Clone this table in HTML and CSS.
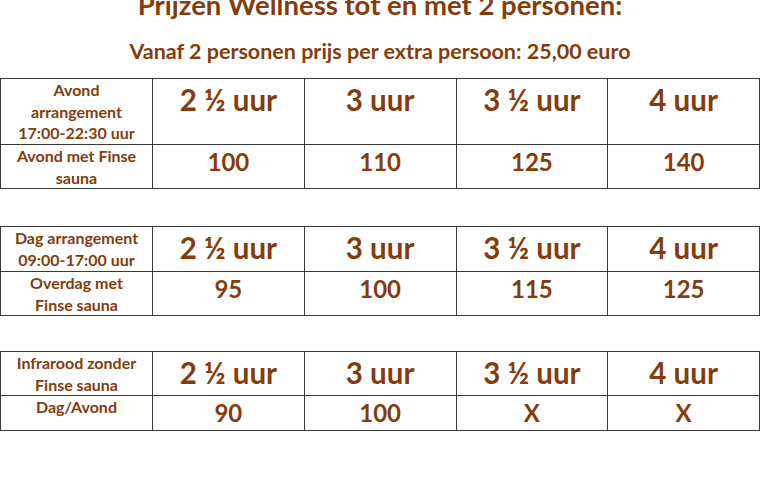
FILE: index.html
```html
<!DOCTYPE html>
<html lang="nl">
<head>
<meta charset="utf-8">
<link rel="stylesheet" href="styles.css">
</head>
<body>
<div class="page">
  <h1 class="title">Prijzen Wellness tot en met 2 personen:</h1>
  <h2 class="subtitle">Vanaf 2 personen prijs per extra persoon: 25,00 euro</h2>

  <table class="prices t1">
    <colgroup><col class="c-label"><col><col><col><col></colgroup>
    <tr class="h66">
      <td class="label">Avond<br>arrangement<br>17:00-22:30 uur</td>
      <td class="big">2 ½ uur</td><td class="big">3 uur</td><td class="big">3 ½ uur</td><td class="big">4 uur</td>
    </tr>
    <tr class="h43">
      <td class="label">Avond met Finse<br>sauna</td>
      <td class="val">100</td><td class="val">110</td><td class="val">125</td><td class="val">140</td>
    </tr>
  </table>

  <table class="prices t2">
    <colgroup><col class="c-label"><col><col><col><col></colgroup>
    <tr class="h45">
      <td class="label">Dag arrangement<br>09:00-17:00 uur</td>
      <td class="big">2 ½ uur</td><td class="big">3 uur</td><td class="big">3 ½ uur</td><td class="big">4 uur</td>
    </tr>
    <tr class="h41">
      <td class="label">Overdag met<br>Finse sauna</td>
      <td class="val">95</td><td class="val">100</td><td class="val">115</td><td class="val">125</td>
    </tr>
  </table>

  <table class="prices t3">
    <colgroup><col class="c-label"><col><col><col><col></colgroup>
    <tr class="h42">
      <td class="label">Infrarood zonder<br>Finse sauna</td>
      <td class="big">2 ½ uur</td><td class="big">3 uur</td><td class="big">3 ½ uur</td><td class="big">4 uur</td>
    </tr>
    <tr class="h35">
      <td class="label">Dag/Avond</td>
      <td class="val">90</td><td class="val">100</td><td class="val">X</td><td class="val">X</td>
    </tr>
  </table>
</div>
</body>
</html>
```

FILE: styles.css
```css
html, body {
  margin: 0;
  padding: 0;
  background: #ffffff;
}

.page {
  width: 760px;
  height: 490px;
  overflow: hidden;
  font-family: "Lato", "Open Sans", "Liberation Sans", sans-serif;
  font-weight: 700;
  color: #843c0c;
}

.title {
  margin: -12px 0 0 0;
  font-size: 27.5px;
  line-height: 34px;
  font-weight: 700;
  text-align: center;
}

.subtitle {
  margin: 16px 0 0 0;
  font-size: 21.5px;
  line-height: 26px;
  font-weight: 700;
  text-align: center;
}

.prices {
  width: 760px;
  table-layout: fixed;
  border-collapse: collapse;
}

.t1 { margin-top: 14px; }
.t2 { margin-top: 37px; }
.t3 { margin-top: 35px; }

.prices td {
  border: 1px solid #3a3a3a;
  padding: 0;
  text-align: center;
  vertical-align: top;
}

.c-label { width: 152px; }

.label {
  font-size: 16px;
  line-height: 21.5px;
}

.big {
  font-size: 29.5px;
  line-height: 42px;
}

.val {
  font-size: 24px;
  line-height: 34px;
  padding-top: 2px;
}

.h66 { height: 66px; }
.h45 { height: 45px; }
.h43 { height: 43px; }
.h42 { height: 42px; }
.h41 { height: 41px; }
.h35 { height: 35px; }
```
